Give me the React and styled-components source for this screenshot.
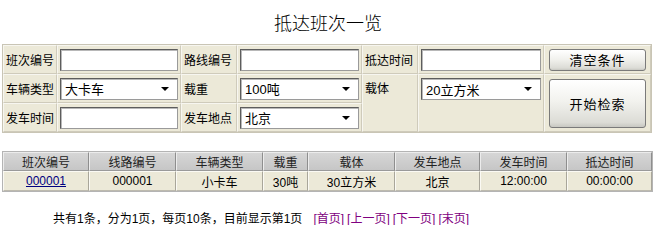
import React from 'react'
import styled, { createGlobalStyle } from 'styled-components'

const Global = createGlobalStyle`
  html, body {
    margin: 0;
    padding: 0;
    background: #fff;
  }
  body {
    font-family: "Liberation Sans", "Noto Sans CJK SC", sans-serif;
    font-size: 12px;
    color: #000;
  }
`

const Page = styled.div`
  width: 656px;
  height: 225px;
  overflow: hidden;
`

const Title = styled.div`
  height: 44px;
  line-height: 48px;
  text-align: center;
  font-size: 18px;
  font-weight: 300;
  box-sizing: border-box;
`

const Form = styled.div`
  margin-left: 2px;
  width: 650px;
  box-sizing: border-box;
  display: grid;
  grid-template-columns: 54px 124px 56px 125px 56px 126px 107px;
  grid-template-rows: 29px 29px 29px;
  background: #ece9d8;
  border: 1px solid #c9c5b5;
`

const Cell = styled.div`
  box-sizing: border-box;
  border-top: 1px solid #f7f6f0;
  border-left: 1px solid #f7f6f0;
  border-right: 1px solid #cfcbbb;
  border-bottom: 1px solid #cfcbbb;
  display: flex;
  align-items: ${p => (p.$top ? 'flex-start' : 'center')};
  justify-content: ${p => (p.$center ? 'center' : 'flex-start')};
  padding: ${p => (p.$top ? '3px 2px 0' : '0 2px')};
  grid-row: ${p => p.$rows || 'auto'};
  white-space: nowrap;
`

const Label = styled(Cell)`
  font-size: 12px;
  padding-left: 2px;
  padding-top: ${p => (p.$top ? '4px' : '0')};
`

const TextBox = styled.div`
  box-sizing: border-box;
  width: 120px;
  height: 22px;
  background: #fff;
  border: 1px solid #5d5d5d;
  border-right-color: #9a9a9a;
  border-bottom-color: #9a9a9a;
  box-shadow: inset 1px 1px 0 #b8b8b8;
`

const Select = styled(TextBox)`
  display: flex;
  align-items: center;
  justify-content: space-between;
  padding: 0 8px 0 4px;
  font-size: 13px;
`

const Arrow = styled.span`
  width: 0;
  height: 0;
  border-left: 4px solid transparent;
  border-right: 4px solid transparent;
  border-top: 4px solid #000;
`

const Button = styled.div`
  box-sizing: border-box;
  width: 97px;
  height: ${p => p.$h}px;
  border: 1px solid #7a7a7a;
  border-radius: 3px;
  background: linear-gradient(#ffffff 0%, #f2f2ee 45%, #dcdcd6 90%, #c8c8c2 100%);
  display: flex;
  align-items: center;
  justify-content: center;
  font-size: 13px;
  letter-spacing: 1px;
`

const Grid = styled.div`
  margin: 18px 0 0 2px;
  width: 651px;
  box-sizing: border-box;
  display: grid;
  grid-template-columns: 86px 87px 87px 45px 87px 85px 87px 85px;
  grid-template-rows: 19px 20px;
  border: 1px solid #b4b4b4;
  background: #fff;
`

const Head = styled.div`
  box-sizing: border-box;
  background: linear-gradient(#d6d6d6, #c6c6c6);
  border-top: 1px solid #ececec;
  border-left: 1px solid #ececec;
  border-right: 1px solid #8e8e8e;
  border-bottom: 1px solid #9a9a9a;
  display: flex;
  align-items: center;
  justify-content: center;
  font-size: 12px;
  color: #222;
`

const Data = styled.div`
  box-sizing: border-box;
  background: #ece9d8;
  border-top: 1px solid #fbfaf4;
  border-left: 1px solid #fbfaf4;
  border-right: 1px solid #a9a69a;
  border-bottom: 1px solid #bdbaae;
  display: flex;
  align-items: center;
  justify-content: center;
  font-size: 12px;
`

const IdLink = styled.a`
  color: #000080;
  text-decoration: underline;
`

const Pager = styled.div`
  margin: 19px 0 0 53px;
  font-size: 12px;
  line-height: 16px;
  white-space: nowrap;
  display: flex;
  gap: 3px;
`

const Summary = styled.span`
  margin-right: 8px;
`

const PageLink = styled.a`
  color: #800080;
  text-decoration: none;
`

const heads = ['班次编号', '线路编号', '车辆类型', '载重', '载体', '发车地点', '发车时间', '抵达时间']
const row = ['000001', '小卡车', '30吨', '30立方米', '北京', '12:00:00', '00:00:00']

export default function App() {
  return (
    <Page>
      <Global />
      <Title>抵达班次一览</Title>
      <Form>
        <Label>班次编号</Label>
        <Cell><TextBox /></Cell>
        <Label>路线编号</Label>
        <Cell><TextBox /></Cell>
        <Label>抵达时间</Label>
        <Cell><TextBox /></Cell>
        <Cell $center><Button $h={22}>清空条件</Button></Cell>

        <Label>车辆类型</Label>
        <Cell><Select>大卡车<Arrow /></Select></Cell>
        <Label>载重</Label>
        <Cell><Select>100吨<Arrow /></Select></Cell>
        <Label $top $rows="span 2">载体</Label>
        <Cell $top $rows="span 2"><Select>20立方米<Arrow /></Select></Cell>
        <Cell $center $rows="span 2"><Button $h={49}>开始检索</Button></Cell>

        <Label>发车时间</Label>
        <Cell><TextBox /></Cell>
        <Label>发车地点</Label>
        <Cell><Select>北京<Arrow /></Select></Cell>
      </Form>
      <Grid>
        {heads.map(h => <Head key={h}>{h}</Head>)}
        <Data><IdLink href="#">000001</IdLink></Data>
        {row.map((v, i) => <Data key={i}>{v}</Data>)}
      </Grid>
      <Pager>
        <Summary>共有1条，分为1页，每页10条，目前显示第1页</Summary>
        <PageLink href="#">[首页]</PageLink>
        <PageLink href="#">[上一页]</PageLink>
        <PageLink href="#">[下一页]</PageLink>
        <PageLink href="#">[末页]</PageLink>
      </Pager>
    </Page>
  )
}
